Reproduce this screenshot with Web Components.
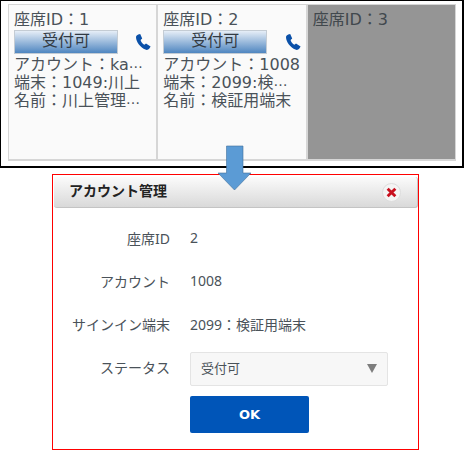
<!DOCTYPE html>
<html lang="ja">
<head>
<meta charset="utf-8">
<title>アカウント管理</title>
<style>
    html, body { margin: 0; padding: 0; background: #fff; }
    body { width: 464px; height: 450px; overflow: hidden; position: relative; font-family: "Noto Sans", "Noto Sans CJK JP", sans-serif; }
</style>
</head>
<body>
<seat-board>
    <seat-card seat="1" account="ka…" terminal="1049:川上" name="川上管理…" active></seat-card>
    <seat-card seat="2" account="1008" terminal="2099:検…" name="検証用端末" active></seat-card>
    <seat-card seat="3"></seat-card>
</seat-board>
<account-dialog seat="2" account="1008" terminal="2099：検証用端末" status="受付可"></account-dialog>
<down-arrow></down-arrow>

<script>
class seatBoard extends HTMLElement {
    constructor() {
        super();
        this.attachShadow({ mode: 'open' });
        this.shadowRoot.innerHTML = `
        <style>
            :host {
                display: flex;
                box-sizing: border-box;
                width: 464px;
                height: 168px;
                padding: 3px 6px 5px 7px;
                border: 1px solid #000;
                border-width: 1px 2px 2px 1px;
            }
        </style>
        <slot></slot>
        `;
    }
}

class seatCard extends HTMLElement {
    constructor() {
        super();
        this.attachShadow({ mode: 'open' });
        this.shadowRoot.innerHTML = `
        <style>
            :host {
                display: block;
                box-sizing: border-box;
                width: 150px;
                height: 157px;
                padding: 6px 5px 4px;
                border: 2px solid #d6d6d6;
                border-width: 1px 1px 2px 1px;
                background: #fafafa;
                color: #4a5259;
                font-family: "DejaVu Sans", "Noto Sans CJK JP", sans-serif;
                font-size: 16px;
                line-height: 18px;
                overflow: hidden;
            }
            :host(:not([active])) { background: #959595; color: #41484d; }
            .row { white-space: nowrap; height: 18px; }
            .dots { position: relative; top: -2px; font-size: 14px; letter-spacing: 4px; }
            .action { display: flex; align-items: center; justify-content: space-between; height: 24px; margin: 1px 0 2px; }
            .btn {
                box-sizing: border-box;
                width: 104px;
                height: 24px;
                text-align: center;
                line-height: 20px;
                color: #333b44;
                border: 1px solid #c4ccd4;
                background: linear-gradient(#e6eef7, #4f86c0);
            }
            svg { width: 16px; height: 16px; display: block; }
            [hidden] { display: none; }
        </style>
        <div class="row seat"></div>
        <div class="more">
            <div class="action">
                <div class="btn">受付可</div>
                <svg viewBox="0 0 16 16"><path fill="#0a50a8" d="M1 3C1 1.8 2.2.8 3.2.4L5.2 0 7.2 4.6 5.6 6C6 7.8 7.6 10 9.4 10.8L11 9.6 15.6 12.6 14.4 14.6C13.4 15.8 11.8 16.2 10.4 15.6 5.6 13.6 1 8 1 3Z"/></svg>
            </div>
            <div class="row account"></div>
            <div class="row terminal"></div>
            <div class="row name"></div>
        </div>
        `;
    }

    setRow(name, label, value) {
        const row = this.shadowRoot.querySelector(`.${name}`);
        row.textContent = label + value.replace('…', '');
        if (value.endsWith('…')) {
            const dots = document.createElement('span');
            dots.className = 'dots';
            dots.textContent = '…';
            row.append(dots);
        }
    }

    connectedCallback() {
        this.setRow('seat', '座席ID：', this.getAttribute('seat'));
        if (this.hasAttribute('active')) {
            this.setRow('account', 'アカウント：', this.getAttribute('account'));
            this.setRow('terminal', '端末：', this.getAttribute('terminal'));
            this.setRow('name', '名前：', this.getAttribute('name'));
        } else {
            this.shadowRoot.querySelector('.more').hidden = true;
        }
    }
}

class accountDialog extends HTMLElement {
    constructor() {
        super();
        this.attachShadow({ mode: 'open' });
        this.shadowRoot.innerHTML = `
        <style>
            :host {
                display: block;
                box-sizing: border-box;
                width: 367px;
                height: 276px;
                margin: 6px 0 0 52px;
                border: 1px solid #f00;
                padding: 2px 0 0 1px;
                color: #4a5259;
                font-size: 14px;
            }
            .head {
                display: flex;
                align-items: center;
                justify-content: space-between;
                box-sizing: border-box;
                height: 31px;
                width: 364px;
                padding: 0 16px 5px 15px;
                border-radius: 3px;
                background: linear-gradient(#fbfbfb, #d9d9d9);
                border-bottom: 1px solid #c4c4c4;
                border-right: 1px solid #c4c4c4;
                font-weight: 700;
                color: #222;
            }
            .close {
                box-sizing: border-box;
                width: 19px;
                height: 19px;
                margin-top: 5px;
                border-radius: 50%;
                background: #f4f4f4;
                border: 1px solid #ddd;
                display: flex;
                align-items: center;
                justify-content: center;
            }
            .close svg { width: 11px; height: 11px; display: block; }
            .form {
                display: grid;
                grid-template-columns: 116px 1fr;
                column-gap: 20px;
                grid-auto-rows: 43px;
                align-items: center;
                padding-top: 8px;
            }
            .label { text-align: right; }
            .select {
                display: flex;
                align-items: center;
                justify-content: space-between;
                box-sizing: border-box;
                width: 198px;
                height: 34px;
                margin-top: 4px;
                padding: 0 10px;
                background: #f7f7f7;
                border: 1px solid #e4e4e4;
                border-radius: 2px;
                font-size: 13px;
            }
            .status { position: relative; top: -1px; }
            .tri { width: 0; height: 0; border: 5.5px solid transparent; border-top: 9px solid #7d7d7d; border-bottom: 0; }
            .ok {
                grid-column: 2;
                align-self: start;
                box-sizing: border-box;
                width: 119px;
                height: 37px;
                margin-top: 8px;
                background: #0055b8;
                color: #fff;
                font-family: "DejaVu Sans", sans-serif;
                font-weight: 700;
                font-size: 13px;
                line-height: 37px;
                text-align: center;
                border-radius: 2px;
            }
        </style>
        <div class="head">
            <span>アカウント管理</span>
            <span class="close"><svg viewBox="0 0 10 10"><path d="M1.5 1.5 8.5 8.5M8.5 1.5 1.5 8.5" stroke="#c8101e" stroke-width="2.6" fill="none"/></svg></span>
        </div>
        <div class="form">
            <div class="label">座席ID</div><div class="seat"></div>
            <div class="label">アカウント</div><div class="account"></div>
            <div class="label">サインイン端末</div><div class="terminal"></div>
            <div class="label">ステータス</div>
            <div class="select"><span class="status"></span><span class="tri"></span></div>
            <div class="ok">OK</div>
        </div>
        `;
    }

    connectedCallback() {
        for (const name of ['seat', 'account', 'terminal', 'status']) {
            this.shadowRoot.querySelector(`.${name}`).textContent = this.getAttribute(name);
        }
    }
}

class downArrow extends HTMLElement {
    constructor() {
        super();
        this.attachShadow({ mode: 'open' });
        this.shadowRoot.innerHTML = `
        <style>
            :host { display: block; position: absolute; left: 217px; top: 145px; width: 36px; height: 46px; }
            svg { display: block; }
        </style>
        <svg width="36" height="46" viewBox="0 0 36 46"><path d="M9.5 1H26V28H34L17.5 45 1 28H9.5Z" fill="#5b9bd5" stroke="#41719c" stroke-width=".6"/></svg>
        `;
    }
}

window.customElements.define('seat-board', seatBoard);
window.customElements.define('seat-card', seatCard);
window.customElements.define('account-dialog', accountDialog);
window.customElements.define('down-arrow', downArrow);
</script>
</body>
</html>
